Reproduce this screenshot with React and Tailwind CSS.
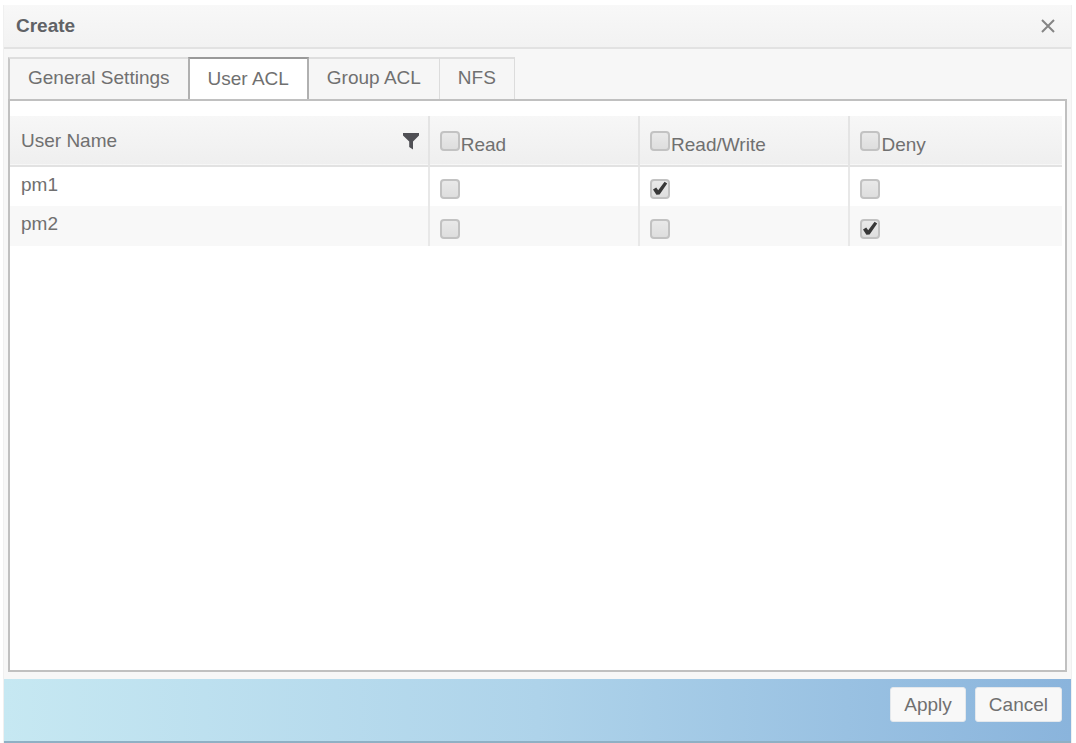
import { useState } from 'react'

const TABS = ['General Settings', 'User ACL', 'Group ACL', 'NFS']

const PERMISSIONS = [
  { id: 'read', label: 'Read' },
  { id: 'write', label: 'Read/Write' },
  { id: 'deny', label: 'Deny' },
]

const INITIAL_USERS = [
  { name: 'pm1', access: 'write' },
  { name: 'pm2', access: 'deny' },
]

function Checkbox({ className = '', ...props }) {
  return (
    <span className={`inline-grid shrink-0 ${className}`}>
      <input
        type="checkbox"
        className="peer col-start-1 row-start-1 size-full appearance-none rounded-[4px] border-2 border-[#c2c2c2] bg-linear-to-b from-[#e9e9e9] to-[#dedede]"
        {...props}
      />
      <svg
        className="pointer-events-none invisible col-start-1 row-start-1 size-full peer-checked:visible"
        viewBox="0 0 20 20"
        fill="none"
      >
        <path d="M3 10.6L6.2 8.6l2 2.6L14.6 2.8l2.6 1.6L9.6 15.6l-3.2.2z" fill="#383838" />
      </svg>
    </span>
  )
}

function Tabs({ active, onChange }) {
  return (
    <div role="tablist" className="-mb-[2px] flex">
      {TABS.map(tab => (
        <button
          key={tab}
          role="tab"
          aria-selected={tab === active}
          onClick={() => onChange(tab)}
          className={[
            'h-11 px-[18px] pb-[2px]',
            tab === active
              ? 'border-x-2 border-t-2 border-x-[#b0b0b0] border-t-[#999999] bg-white'
              : 'border-b-2 border-r border-t-2 border-t-[#dedede] border-r-[#dcdcdc] border-b-[#b4b4b4] bg-[#f6f6f6] first:border-l-2 first:border-r-0 first:border-l-[#c8c8c8]',
          ].join(' ')}
        >
          {tab}
        </button>
      ))}
    </div>
  )
}

function AclTable({ users, onToggle }) {
  const [selectAll, setSelectAll] = useState({})

  return (
    <table className="w-full table-fixed border-collapse text-left">
      <colgroup>
        <col className="w-[39.8%]" />
        <col className="w-[20%]" />
        <col className="w-[20%]" />
        <col />
      </colgroup>
      <thead>
        <tr className="h-[50px] border-b-2 border-[#e2e2e2] bg-linear-to-b from-[#f7f7f7] to-[#efefef]">
          <th scope="col" className="pl-[11px] pr-2 font-normal">
            <div className="flex items-center justify-between">
              <span>User Name</span>
              <button aria-label="Filter">
                <svg className="size-[18px]" viewBox="0 0 18 18" fill="#505055">
                  <path d="M1 1h16v2.6L11 9.6V17.5L7.2 15V9.6L1 3.6z" />
                </svg>
              </button>
            </div>
          </th>
          {PERMISSIONS.map(p => (
            <th key={p.id} scope="col" className="border-l-2 border-[#e4e4e4] pl-[10px] font-normal">
              <label className="flex items-center gap-px">
                <Checkbox
                  className="size-5"
                  checked={!!selectAll[p.id]}
                  onChange={e => setSelectAll({ ...selectAll, [p.id]: e.target.checked })}
                />
                <span className="pt-2">{p.label}</span>
              </label>
            </th>
          ))}
        </tr>
      </thead>
      <tbody>
        {users.map(user => (
          <tr key={user.name} className="h-10 even:bg-[#f8f8f8]">
            <td className="pb-1 pl-[11px]">{user.name}</td>
            {PERMISSIONS.map(p => (
              <td key={p.id} className="border-l-2 border-[#e8e8e8] pl-[10px] pt-1">
                <Checkbox
                  className="size-5 align-middle"
                  aria-label={`${p.label} for ${user.name}`}
                  checked={user.access === p.id}
                  onChange={() => onToggle(user.name, p.id)}
                />
              </td>
            ))}
          </tr>
        ))}
      </tbody>
    </table>
  )
}

function FooterButton({ children }) {
  return (
    <button className="h-[35px] rounded-[3px] border border-[#e4e8ec] bg-[#f8f8f8] px-[13px]">
      {children}
    </button>
  )
}

export default function App() {
  const [tab, setTab] = useState('User ACL')
  const [users, setUsers] = useState(INITIAL_USERS)

  function toggle(name, access) {
    setUsers(prev =>
      prev.map(u => (u.name === name ? { ...u, access: u.access === access ? null : access } : u))
    )
  }

  return (
    <div className="flex min-h-screen bg-white pl-[3px] pr-1 pt-[5px] font-['Liberation_Sans',Arial,sans-serif] text-[19px] leading-6 text-[#707070]">
      <div role="dialog" aria-labelledby="dialog-title" className="flex flex-1 flex-col border-x border-[#f0f0f0] bg-[#f7f7f7]">
        {/* Title bar */}
        <header className="flex h-11 items-center justify-between border-b-2 border-[#e2e2e2] bg-linear-to-b from-[#f8f8f8] to-[#f2f2f2] pl-3 pr-4">
          <h1 id="dialog-title" className="font-bold text-[#606266]">Create</h1>
          <button aria-label="Close">
            <svg className="size-[14px]" viewBox="0 0 14 14" fill="none" stroke="#858585" strokeWidth="2">
              <path d="M1 1l12 12M13 1L1 13" />
            </svg>
          </button>
        </header>

        <main className="flex flex-1 flex-col px-1 pb-[7px] pt-2">
          <Tabs active={tab} onChange={setTab} />
          <div role="tabpanel" aria-label={tab} className="flex-1 border-2 border-[#c0c0c0] bg-white pr-[3px] pt-[15px]">
            <AclTable users={users} onToggle={toggle} />
          </div>
        </main>

        <footer className="flex h-16 items-start justify-end gap-[9px] border-b-2 border-[#8fb0c4] bg-linear-to-r from-[#c6e8f2] via-[#aed3ea] to-[#8ab4dc] pr-[9px] pt-2">
          <FooterButton>Apply</FooterButton>
          <FooterButton>Cancel</FooterButton>
        </footer>
      </div>
    </div>
  )
}
